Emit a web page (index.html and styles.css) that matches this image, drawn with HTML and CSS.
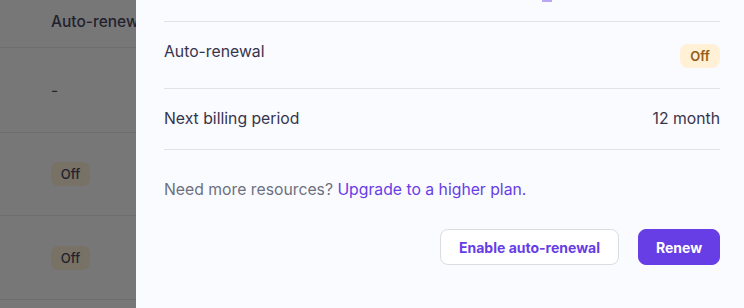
FILE: index.html
```html
<!DOCTYPE html>
<html lang="en">
<head>
<meta charset="utf-8">
<link rel="stylesheet" href="styles.css">
</head>
<body>
<div class="page">
  <div class="backdrop">
    <div class="table">
      <div class="trow thead"><span class="th">Auto-renewal</span></div>
      <div class="trow r1"><span class="dash">-</span></div>
      <div class="trow r2"><span class="tbadge">Off</span></div>
      <div class="trow r3"><span class="tbadge">Off</span></div>
    </div>
    <div class="overlay"></div>
  </div>
  <aside class="panel">
    <div class="top"><span class="mark"></span></div>
    <div class="row row-first">
      <span class="label">Auto-renewal</span>
      <span class="badge">Off</span>
    </div>
    <div class="row row-second">
      <span class="label">Next billing period</span>
      <span class="value">12 month</span>
    </div>
    <p class="note">Need more resources? <a class="link" href="#">Upgrade to a higher plan.</a></p>
    <div class="actions">
      <button class="btn btn-outline">Enable auto-renewal</button>
      <button class="btn btn-primary">Renew</button>
    </div>
  </aside>
</div>
</body>
</html>
```
FILE: styles.css
```css
* { box-sizing: border-box; }
html, body { margin: 0; padding: 0; }
body {
  width: 744px;
  height: 308px;
  overflow: hidden;
  font-family: Inter, "Noto Sans", sans-serif;
  color: #36344d;
}
.page {
  display: flex;
  width: 744px;
  height: 308px;
}
.backdrop {
  position: relative;
  width: 136px;
  flex: none;
  background: #ffffff;
  overflow: hidden;
}
.table {
  display: flex;
  flex-direction: column;
  width: 300px;
}
.trow {
  display: flex;
  align-items: center;
  padding-left: 51px;
  border-bottom: 1px solid #e6e6ea;
  font-size: 15.5px;
}
.thead { height: 48px; padding-bottom: 4px; }
.th { font-weight: 500; color: #36344d; white-space: nowrap; }
.r1 { height: 85px; }
.r2 { height: 83px; }
.r3 { height: 84px; }
.dash { color: #36344d; }
.tbadge {
  display: inline-flex;
  align-items: center;
  justify-content: center;
  width: 39px;
  height: 24px;
  border-radius: 7px;
  background: #fff0d3;
  color: #36344d;
  font-size: 13px;
  font-weight: 500;
}
.overlay {
  position: absolute;
  inset: 0;
  background: rgba(20, 20, 22, 0.58);
}
.panel {
  flex: 1;
  background: #fafbfe;
  padding: 0 24px 0 28px;
  display: flex;
  flex-direction: column;
}
.top {
  height: 22px;
  border-bottom: 1px solid #e2e3ea;
  padding-left: 378px;
}
.mark {
  display: block;
  width: 10px;
  height: 2px;
  background: #b9a8f1;
}
.row {
  display: flex;
  justify-content: space-between;
  align-items: flex-start;
  border-bottom: 1px solid #e2e3ea;
  font-size: 15.75px;
  line-height: 20px;
}
.row-first { padding: 20px 0 20px; }
.row-second { padding: 20px 0 20px; }
.label { color: #36344d; }
.value { color: #36344d; }
.badge {
  display: inline-flex;
  align-items: center;
  justify-content: center;
  width: 40px;
  height: 24px;
  margin-top: 2px;
  border-radius: 8px;
  background: #fff0d6;
  color: #935d17;
  font-size: 13px;
  font-weight: 600;
}
.note {
  margin: 30px 0 0;
  font-size: 15.75px;
  line-height: 20px;
  color: #6d7081;
}
.link {
  color: #673de6;
  text-decoration: none;
}
.actions {
  display: flex;
  justify-content: flex-end;
  gap: 19px;
  margin-top: 29px;
}
.btn {
  height: 36px;
  border-radius: 8px;
  font-family: Inter, "Noto Sans", sans-serif;
  font-size: 14px;
  font-weight: 700;
  cursor: pointer;
}
.btn-outline {
  width: 179px;
  background: #ffffff;
  border: 1px solid #dadce0;
  color: #673de6;
}
.btn-primary {
  width: 82px;
  background: #673de6;
  border: 1px solid #673de6;
  color: #ffffff;
}
```
